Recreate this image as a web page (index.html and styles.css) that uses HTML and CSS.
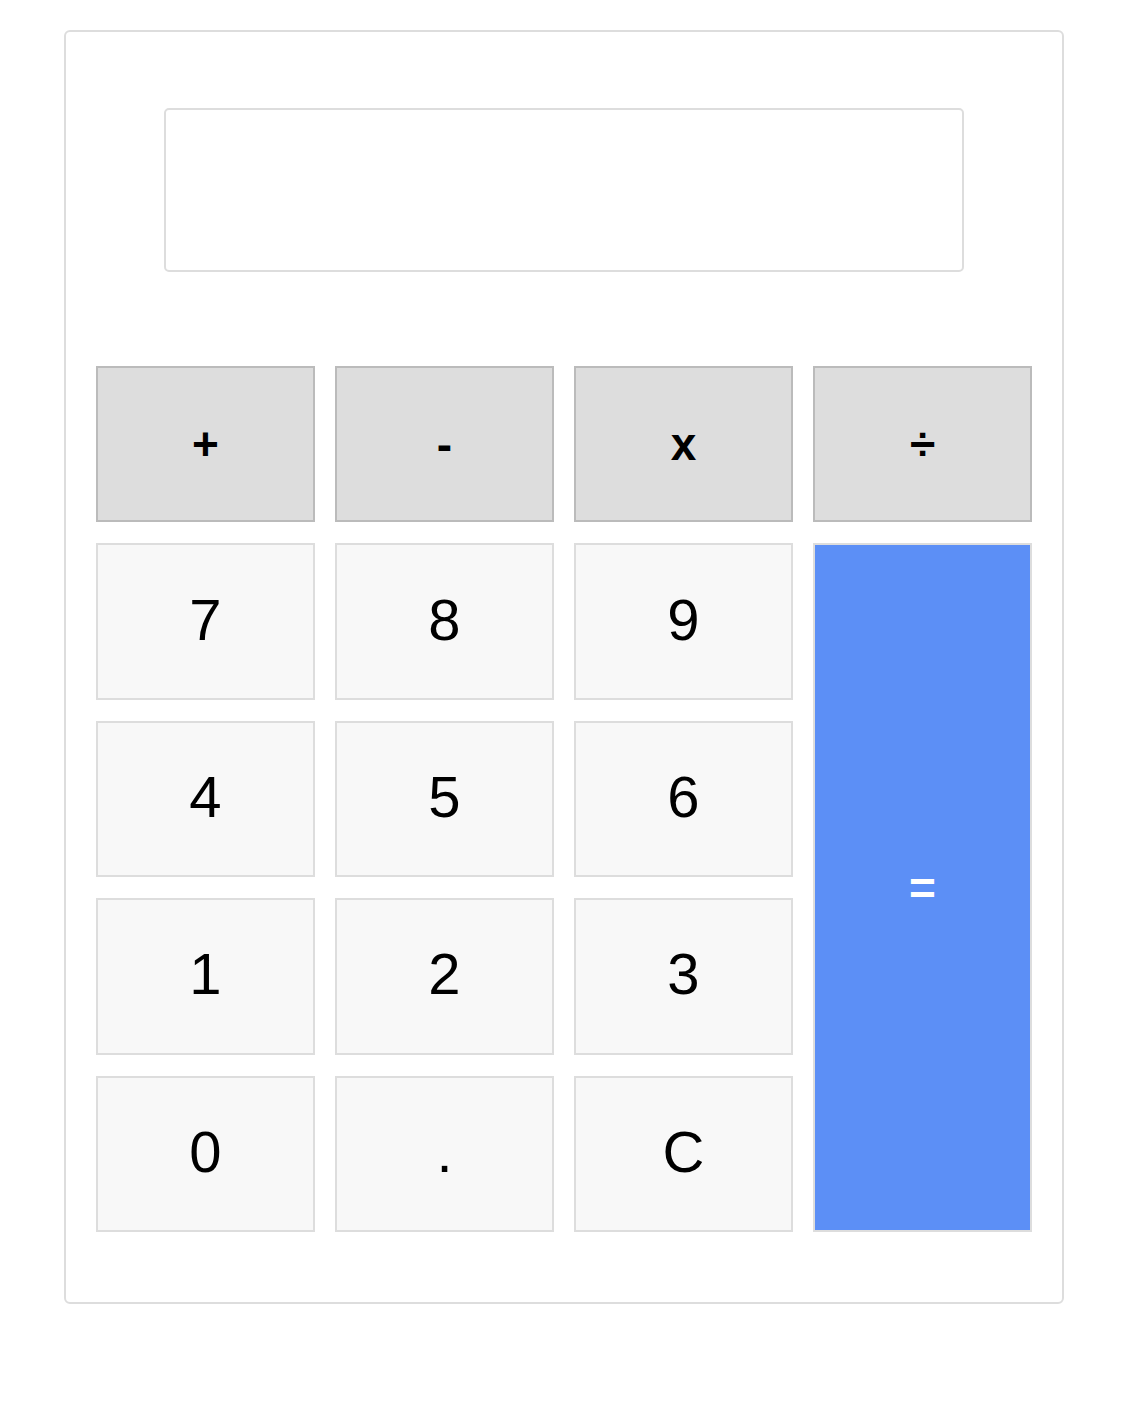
FILE: index.html
```html
<!DOCTYPE html>
<html lang="en">
<head>
<meta charset="utf-8">
<title>Calculator</title>
<link rel="stylesheet" href="styles.css">
</head>
<body>
<div class="calculator">
  <div class="display"></div>
  <div class="keys">
    <button class="key op">+</button>
    <button class="key op">-</button>
    <button class="key op">x</button>
    <button class="key op">÷</button>
    <button class="key num">7</button>
    <button class="key num">8</button>
    <button class="key num">9</button>
    <button class="key equals">=</button>
    <button class="key num">4</button>
    <button class="key num">5</button>
    <button class="key num">6</button>
    <button class="key num">1</button>
    <button class="key num">2</button>
    <button class="key num">3</button>
    <button class="key num">0</button>
    <button class="key num">.</button>
    <button class="key num">C</button>
  </div>
</div>
</body>
</html>
```
FILE: styles.css
```css
html, body {
  margin: 0;
  padding: 0;
  background: #fff;
}

body {
  font-family: "Liberation Sans", Arial, sans-serif;
  padding-top: 30px;
}

.calculator {
  box-sizing: border-box;
  width: 1000px;
  height: 1274px;
  margin-left: 64px;
  border: 2px solid #ddd;
  border-radius: 6px;
  padding: 76px 30px 70px;
  display: flex;
  flex-direction: column;
}

.display {
  box-sizing: border-box;
  width: 800px;
  height: 164px;
  margin: 0 auto 94px;
  border: 2px solid #ddd;
  border-radius: 5px;
}

.keys {
  display: grid;
  grid-template-columns: repeat(4, 1fr);
  grid-template-rows: repeat(5, 1fr);
  column-gap: 20px;
  row-gap: 21px;
  height: 866px;
}

.key {
  box-sizing: border-box;
  margin: 0;
  padding: 0;
  border-radius: 0;
  font-family: "Liberation Sans", Arial, sans-serif;
  color: #000;
  display: flex;
  align-items: center;
  justify-content: center;
  cursor: pointer;
}

.op {
  background: #ddd;
  border: 2px solid #bbb;
  font-size: 46px;
  font-weight: bold;
}

.num {
  background: #f8f8f8;
  border: 2px solid #ddd;
  font-size: 58px;
  padding-bottom: 5px;
}

.equals {
  grid-column: 4;
  grid-row: 2 / span 4;
  background: #5c8ff6;
  border: 2px solid #ddd;
  color: #fff;
  font-size: 46px;
  font-weight: bold;
}
```
